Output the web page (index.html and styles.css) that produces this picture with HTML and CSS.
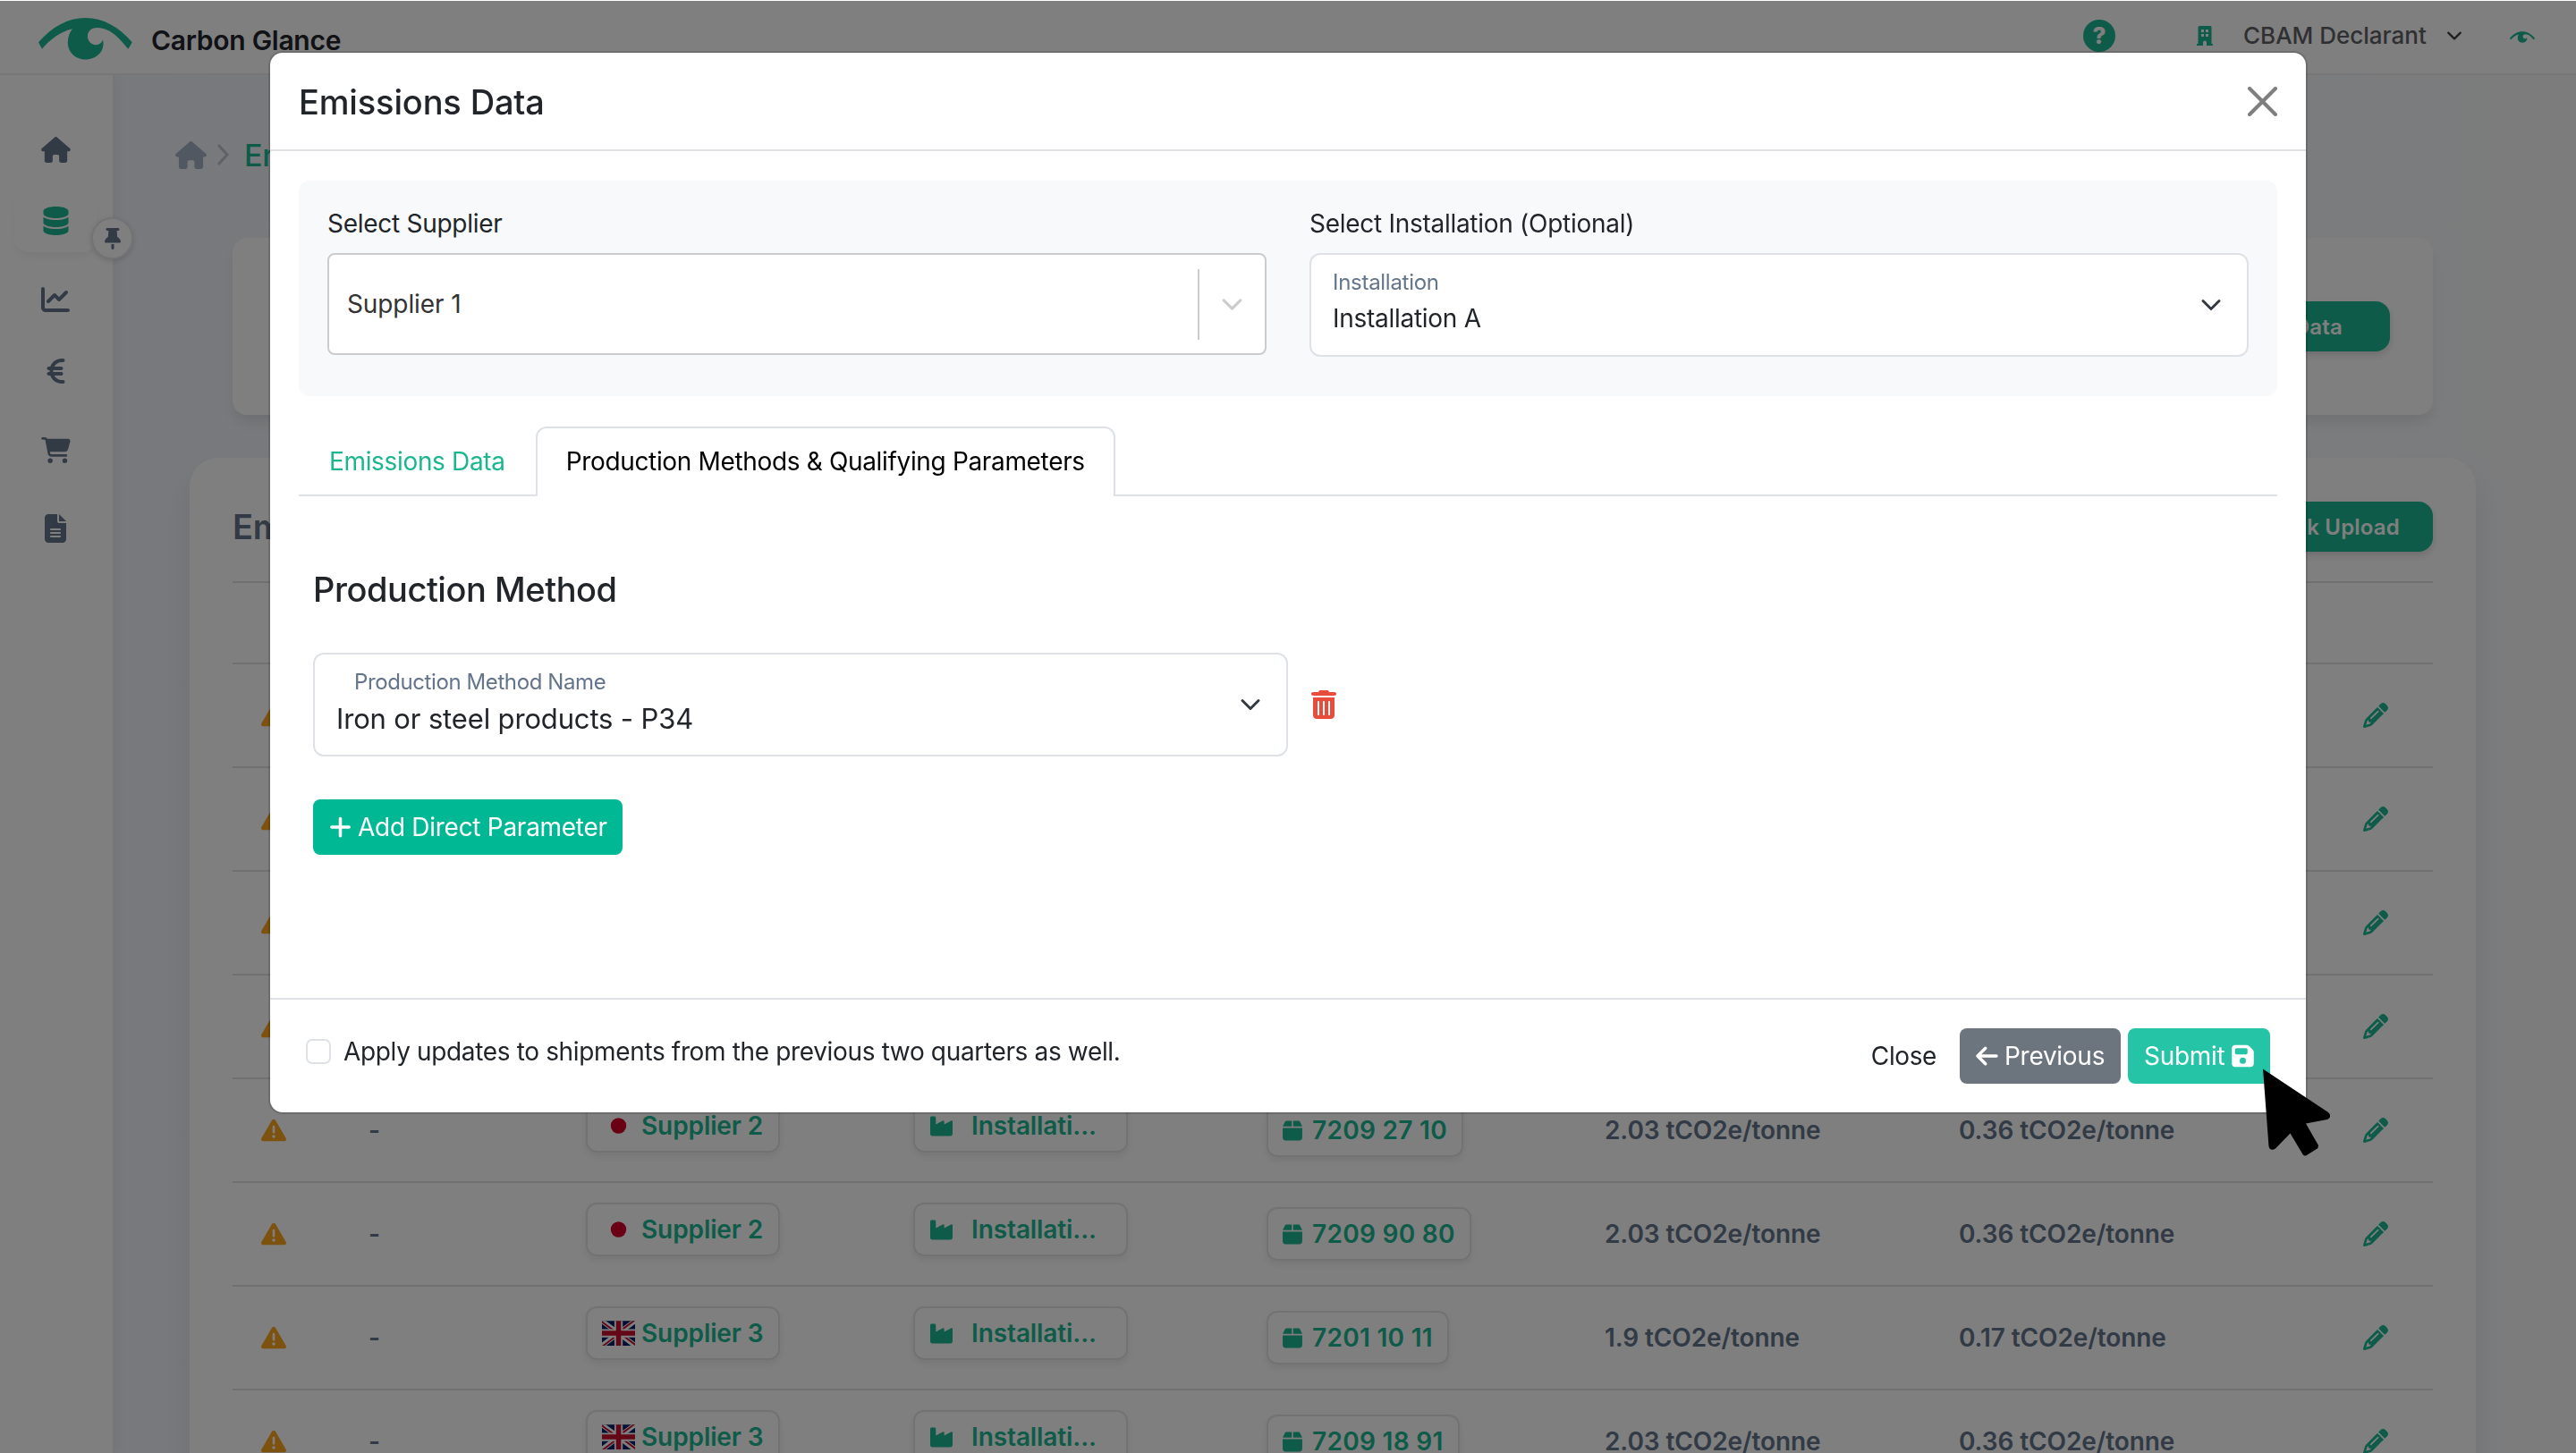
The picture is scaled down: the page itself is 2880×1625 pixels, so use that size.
FILE: index.html
```html
<!DOCTYPE html>
<html lang="en">
<head>
  <meta charset="UTF-8">
  <title>Carbon Glance</title>
  <meta name="viewport" content="width=device-width, initial-scale=1.0">
  <link rel="stylesheet" href="styles.css">
</head>
<body>

<!-- icon sprite -->
<svg class="sprite" xmlns="http://www.w3.org/2000/svg">
  <symbol id="logo" viewBox="0 0 105 47"><path d="M0 27.3C15 10 33 0 52.5 0S90 10 104.8 27.3L100.4 34.7C91 24 82 11.5 66 11C58 11 54.5 16 55 21.5C55.5 27 60 30.5 64.5 30.2C68 30 71 28 72 24.5C75 37 65 46.5 52.6 46.5C40 46.5 32.5 37 32.8 27C33 21 35 16 38 12.2C25 15 13 24 4 34.7Z"/></symbol>
  <symbol id="home" viewBox="0 0 576 512"><path d="M575.8 255.5c0 18-15 32.1-32 32.1h-32l.7 160.2c0 2.7-.2 5.4-.5 8.1V472c0 22.1-17.9 40-40 40H456c-1.1 0-2.2 0-3.3-.1c-1.4 .1-2.8 .1-4.2 .1H416 392c-22.1 0-40-17.9-40-40V448 384c0-17.7-14.3-32-32-32H256c-17.7 0-32 14.3-32 32v64 24c0 22.1-17.9 40-40 40H160 128.1c-1.5 0-3-.1-4.5-.2c-1.2 .1-2.4 .2-3.6 .2H104c-22.1 0-40-17.9-40-40V360c0-.9 0-1.9 .1-2.8V287.6H32c-18 0-32-14-32-32.1c0-9 3-17 10-24L266.4 8c7-7 15-8 22-8s15 2 21 7L564.8 231.5c8 7 12 15 11 24z"/></symbol>
  <symbol id="database" viewBox="0 0 448 512"><path d="M448 80v48c0 44.2-100.3 80-224 80S0 172.2 0 128V80C0 35.8 100.3 0 224 0S448 35.8 448 80zM393.2 214.7c20.8-7.4 39.9-16.9 54.8-28.6V288c0 44.2-100.3 80-224 80S0 332.2 0 288V186.1c14.9 11.8 34 21.2 54.8 28.6C99.7 230.7 159.5 240 224 240s124.3-9.3 169.2-25.3zM0 346.1c14.9 11.8 34 21.2 54.8 28.6C99.7 390.7 159.5 400 224 400s124.3-9.3 169.2-25.3c20.8-7.4 39.9-16.9 54.8-28.6V432c0 44.2-100.3 80-224 80S0 476.2 0 432V346.1z"/></symbol>
  <symbol id="chart" viewBox="0 0 512 512"><path d="M64 64c0-17.7-14.3-32-32-32S0 46.3 0 64V400c0 44.2 35.8 80 80 80H480c17.7 0 32-14.3 32-32s-14.3-32-32-32H80c-8.8 0-16-7.2-16-16V64zm406.6 86.6c12.5-12.5 12.5-32.8 0-45.3s-32.8-12.5-45.3 0L320 210.7l-57.4-57.4c-12.5-12.5-32.8-12.5-45.3 0l-112 112c-12.5 12.5-12.5 32.8 0 45.3s32.8 12.5 45.3 0L240 221.3l57.4 57.4c12.5 12.5 32.8 12.5 45.3 0l128-128z"/></symbol>
  <symbol id="euro" viewBox="0 0 320 512"><path d="M48.1 240c-.1 2.7-.1 5.3-.1 8v16c0 2.7 0 5.3 .1 8H32c-17.7 0-32 14.3-32 32s14.3 32 32 32H60.3C89.9 419.9 170 480 264 480h24c17.7 0 32-14.3 32-32s-14.3-32-32-32H264c-57.9 0-108.2-32.4-133.9-80H256c17.7 0 32-14.3 32-32s-14.3-32-32-32H112.2c-.1-2.6-.2-5.3-.2-8V248c0-2.7 .1-5.4 .2-8H256c17.7 0 32-14.3 32-32s-14.3-32-32-32H130.1c25.7-47.6 76-80 133.9-80h24c17.7 0 32-14.3 32-32s-14.3-32-32-32H264C170 32 89.9 92.1 60.3 176H32c-17.7 0-32 14.3-32 32s14.3 32 32 32H48.1z"/></symbol>
  <symbol id="cart" viewBox="0 0 576 512"><path d="M0 24C0 10.7 10.7 0 24 0H69.5c22 0 41.5 12.8 50.6 32h411c26.3 0 45.5 25 38.6 50.4l-41 152.3c-8.5 31.4-37 53.3-69.5 53.3H170.7l5.4 28.5c2.2 11.3 12.1 19.5 23.6 19.5H488c13.3 0 24 10.7 24 24s-10.7 24-24 24H199.7c-34.6 0-64.3-24.6-70.7-58.5L77.4 54.5c-.7-3.8-4-6.5-7.9-6.5H24C10.7 48 0 37.3 0 24zM128 464a48 48 0 1 1 96 0 48 48 0 1 1 -96 0zm336-48a48 48 0 1 1 0 96 48 48 0 1 1 0-96z"/></symbol>
  <symbol id="file" viewBox="0 0 384 512"><path d="M64 0C28.7 0 0 28.7 0 64V448c0 35.3 28.7 64 64 64H320c35.3 0 64-28.7 64-64V160H256c-17.7 0-32-14.3-32-32V0H64zM256 0V128H384L256 0zM112 256H272c8.8 0 16 7.2 16 16s-7.2 16-16 16H112c-8.8 0-16-7.2-16-16s7.2-16 16-16zm0 64H272c8.8 0 16 7.2 16 16s-7.2 16-16 16H112c-8.8 0-16-7.2-16-16s7.2-16 16-16zm0 64H272c8.8 0 16 7.2 16 16s-7.2 16-16 16H112c-8.8 0-16-7.2-16-16s7.2-16 16-16z"/></symbol>
  <symbol id="pin" viewBox="0 0 384 512"><path d="M32 32C32 14.3 46.3 0 64 0H320c17.7 0 32 14.3 32 32s-14.3 32-32 32H290.5l11.4 148.2c36.7 19.9 65.7 53.2 79.5 94.7l1 3c3.3 9.8 1.6 20.5-4.4 28.8s-15.7 13.3-26 13.3H32c-10.3 0-19.9-4.9-26-13.3s-7.7-19.1-4.4-28.8l1-3c13.8-41.5 42.8-74.8 79.5-94.7L93.5 64H64C46.3 64 32 49.7 32 32zM160 384h64v96c0 17.7-14.3 32-32 32s-32-14.3-32-32V384z"/></symbol>
  <symbol id="building" viewBox="0 0 18 22"><path fill-rule="evenodd" d="M3 0H15Q16.5 0 16.5 1.5V20H18V22H11V18.5Q11 16.5 9 16.5Q7 16.5 7 18.5V22H0V20H1.5V1.5Q1.5 0 3 0ZM5 4V7H8V4ZM10 4V7H13V4ZM5 9V12H8V9ZM10 9V12H13V9Z"/></symbol>
  <symbol id="chevron" viewBox="0 0 16 16"><path fill="none" stroke="currentColor" stroke-width="2" stroke-linecap="round" stroke-linejoin="round" d="M2 5l6 6 6-6"/></symbol>
  <symbol id="warning" viewBox="0 0 512 512"><path d="M256 32c14.2 0 27.3 7.5 34.5 19.8l216 368c7.3 12.4 7.3 27.7 .2 40.1S486.3 480 472 480H40c-14.3 0-27.6-7.7-34.7-20.1s-7-27.8 .2-40.1l216-368C228.7 39.5 241.8 32 256 32zm0 128c-13.3 0-24 10.7-24 24V296c0 13.3 10.7 24 24 24s24-10.7 24-24V184c0-13.3-10.7-24-24-24zm32 224a32 32 0 1 0 -64 0 32 32 0 1 0 64 0z"/></symbol>
  <symbol id="industry" viewBox="0 0 512 512"><path d="M32 32C14.3 32 0 46.3 0 64V304v48 80c0 26.5 21.5 48 48 48H464c26.5 0 48-21.5 48-48V304 152.2c0-18.2-19.4-29.7-35.4-21.1L320 215.4V152.2c0-18.2-19.4-29.7-35.4-21.1L128 215.4V64c0-17.7-14.3-32-32-32H32z"/></symbol>
  <symbol id="box" viewBox="0 0 448 512"><path d="M50.7 58.5L0 160H208V32H93.7C75.5 32 58.9 42.3 50.7 58.5zM240 160H448L397.3 58.5C389.1 42.3 372.5 32 354.3 32H240V160zm208 32H0V416c0 35.3 28.7 64 64 64H384c35.3 0 64-28.7 64-64V192z"/></symbol>
  <symbol id="pencil" viewBox="0 0 512 512"><path d="M410.3 231l11.3-11.3-33.9-33.9-62.1-62.1L291.7 89.8l-11.3 11.3-22.6 22.6L58.6 322.9c-10.4 10.4-18 23.3-22.2 37.4L1 480.7c-2.5 8.4-.2 17.5 6.1 23.7s15.3 8.5 23.7 6.1l120.3-35.4c14.1-4.2 27-11.8 37.4-22.2L387.7 253.7 410.3 231zM160 399.4l-9.1 22.7c-4 3.1-8.5 5.4-13.3 6.9L59.4 452l23-78.1c1.4-4.9 3.8-9.4 6.9-13.3l22.7-9.1v32c0 8.8 7.2 16 16 16h32zM362.7 18.7L348.3 33.2 325.7 55.8 314.3 67.1l33.9 33.9 62.1 62.1 33.9 33.9 11.3-11.3 22.6-22.6 14.5-14.5c25-25 25-65.5 0-90.5L453.3 18.7c-25-25-65.5-25-90.5 0zm-47.4 168l-144 144c-6.2 6.2-16.4 6.2-22.6 0s-6.2-16.4 0-22.6l144-144c6.2-6.2 16.4-6.2 22.6 0s6.2 16.4 0 22.6z"/></symbol>
  <symbol id="japan" viewBox="0 0 40 30"><path fill="#fff" d="M0 0h40v30H0z"/><circle cx="20" cy="15" r="9.4" fill="#d30029"/></symbol>
  <symbol id="uk" viewBox="0 0 640 480"><path fill="#012169" d="M0 0h640v480H0z"/><path fill="#fff" d="m75 0 244 181L562 0h78v62L400 241l240 178v61h-80L320 301 81 480H0v-60l239-178L0 64V0z"/><path fill="#c8102e" d="m424 281 216 159v40L369 281zm-184 20 6 35L54 480H0zM640 0v3L391 191l2-44L590 0zM0 0l239 176h-60L0 42z"/><path fill="#fff" d="M241 0v480h160V0zM0 160v160h640V160z"/><path fill="#c8102e" d="M0 193v96h640v-96zM273 0v480h96V0z"/></symbol>
  <symbol id="trash" viewBox="0 0 448 512"><path d="M135.2 17.7C140.6 6.8 151.7 0 163.8 0H284.2c12.1 0 23.2 6.8 28.6 17.7L320 32h96c17.7 0 32 14.3 32 32s-14.3 32-32 32H32C14.3 96 0 81.7 0 64S14.3 32 32 32h96l7.2-14.3zM32 128H416V448c0 35.3-28.7 64-64 64H96c-35.3 0-64-28.7-64-64V128zm96 64c-8.8 0-16 7.2-16 16V432c0 8.8 7.2 16 16 16s16-7.2 16-16V208c0-8.8-7.2-16-16-16zm96 0c-8.8 0-16 7.2-16 16V432c0 8.8 7.2 16 16 16s16-7.2 16-16V208c0-8.8-7.2-16-16-16zm96 0c-8.8 0-16 7.2-16 16V432c0 8.8 7.2 16 16 16s16-7.2 16-16V208c0-8.8-7.2-16-16-16z"/></symbol>
  <symbol id="plus" viewBox="0 0 448 512"><path d="M256 80c0-17.7-14.3-32-32-32s-32 14.3-32 32V224H48c-17.7 0-32 14.3-32 32s14.3 32 32 32H192V432c0 17.7 14.3 32 32 32s32-14.3 32-32V288H400c17.7 0 32-14.3 32-32s-14.3-32-32-32H256V80z"/></symbol>
  <symbol id="arrow-left" viewBox="0 0 448 512"><path d="M9.4 233.4c-12.5 12.5-12.5 32.8 0 45.3l160 160c12.5 12.5 32.8 12.5 45.3 0s12.5-32.8 0-45.3L109.2 288 416 288c17.7 0 32-14.3 32-32s-14.3-32-32-32l-306.7 0L214.6 118.6c12.5-12.5 12.5-32.8 0-45.3s-32.8-12.5-45.3 0l-160 160z"/></symbol>
  <symbol id="save" viewBox="0 0 448 512"><path d="M64 32C28.7 32 0 60.7 0 96V416c0 35.3 28.7 64 64 64H384c35.3 0 64-28.7 64-64V173.3c0-17-6.7-33.3-18.7-45.3L352 50.7C340 38.7 323.7 32 306.7 32H64zm0 96c0-17.7 14.3-32 32-32H288c17.7 0 32 14.3 32 32v64c0 17.7-14.3 32-32 32H96c-17.7 0-32-14.3-32-32V128zM224 288a64 64 0 1 1 0 128 64 64 0 1 1 0-128z"/></symbol>
</svg>

<header class="topbar">
  <svg class="logo"><use href="#logo"/></svg>
  <span class="brand">Carbon Glance</span>
  <div class="account">
    <span class="help">?</span>
    <svg class="building"><use href="#building"/></svg>
    <span class="role">CBAM Declarant</span>
    <svg class="role-chevron"><use href="#chevron"/></svg>
    <svg class="avatar"><use href="#logo"/></svg>
  </div>
</header>

<div class="layout">
  <nav class="sidebar">
    <a class="nav-item"><svg class="icon-wide"><use href="#home"/></svg></a>
    <a class="nav-item active"><svg class="icon-tall"><use href="#database"/></svg></a>
    <a class="nav-item"><svg class="icon-square"><use href="#chart"/></svg></a>
    <a class="nav-item"><svg class="icon-tall"><use href="#euro"/></svg></a>
    <a class="nav-item"><svg class="icon-wide"><use href="#cart"/></svg></a>
    <a class="nav-item"><svg class="icon-square"><use href="#file"/></svg></a>
    <span class="pin"><svg><use href="#pin"/></svg></span>
  </nav>

  <main class="main">
    <div class="breadcrumb">
      <svg class="crumb-home"><use href="#home"/></svg>
      <svg class="crumb-sep" viewBox="0 0 14 24"><path d="M2 1l10 11L2 23"/></svg>
      <span>Emissions</span>
    </div>

    <section class="card actions">
      <button class="main-btn">Add Data</button>
    </section>

    <section class="card list">
      <div class="list-head">
        <h2>Emissions</h2>
        <button class="main-btn">Bulk Upload</button>
      </div>
      <table>
        <colgroup>
          <col class="c-warn"><col class="c-date"><col class="c-supplier"><col class="c-inst"><col class="c-code"><col class="c-direct"><col class="c-indirect"><col>
        </colgroup>
        <thead><tr><th colspan="8"></th></tr></thead>
        <tbody>
          <tr><td><svg class="warn"><use href="#warning"/></svg></td><td colspan="6"></td><td><svg class="edit"><use href="#pencil"/></svg></td></tr>
          <tr><td><svg class="warn"><use href="#warning"/></svg></td><td colspan="6"></td><td><svg class="edit"><use href="#pencil"/></svg></td></tr>
          <tr><td><svg class="warn"><use href="#warning"/></svg></td><td colspan="6"></td><td><svg class="edit"><use href="#pencil"/></svg></td></tr>
          <tr><td><svg class="warn"><use href="#warning"/></svg></td><td colspan="6"></td><td><svg class="edit"><use href="#pencil"/></svg></td></tr>
          <tr>
            <td><svg class="warn"><use href="#warning"/></svg></td>
            <td>-</td>
            <td class="raised"><span class="badge supplier"><svg class="flag"><use href="#japan"/></svg>Supplier 2</span></td>
            <td class="raised"><span class="badge inst"><svg><use href="#industry"/></svg>Installati...</span></td>
            <td><span class="badge code"><svg><use href="#box"/></svg>7209 27 10</span></td>
            <td>2.03 tCO2e/tonne</td>
            <td>0.36 tCO2e/tonne</td>
            <td><svg class="edit"><use href="#pencil"/></svg></td>
          </tr>
          <tr>
            <td><svg class="warn"><use href="#warning"/></svg></td>
            <td>-</td>
            <td class="raised"><span class="badge supplier"><svg class="flag"><use href="#japan"/></svg>Supplier 2</span></td>
            <td class="raised"><span class="badge inst"><svg><use href="#industry"/></svg>Installati...</span></td>
            <td><span class="badge code"><svg><use href="#box"/></svg>7209 90 80</span></td>
            <td>2.03 tCO2e/tonne</td>
            <td>0.36 tCO2e/tonne</td>
            <td><svg class="edit"><use href="#pencil"/></svg></td>
          </tr>
          <tr>
            <td><svg class="warn"><use href="#warning"/></svg></td>
            <td>-</td>
            <td class="raised"><span class="badge supplier"><svg class="flag"><use href="#uk"/></svg>Supplier 3</span></td>
            <td class="raised"><span class="badge inst"><svg><use href="#industry"/></svg>Installati...</span></td>
            <td><span class="badge code"><svg><use href="#box"/></svg>7201 10 11</span></td>
            <td>1.9 tCO2e/tonne</td>
            <td>0.17 tCO2e/tonne</td>
            <td><svg class="edit"><use href="#pencil"/></svg></td>
          </tr>
          <tr>
            <td><svg class="warn"><use href="#warning"/></svg></td>
            <td>-</td>
            <td class="raised"><span class="badge supplier"><svg class="flag"><use href="#uk"/></svg>Supplier 3</span></td>
            <td class="raised"><span class="badge inst"><svg><use href="#industry"/></svg>Installati...</span></td>
            <td><span class="badge code"><svg><use href="#box"/></svg>7209 18 91</span></td>
            <td>2.03 tCO2e/tonne</td>
            <td>0.36 tCO2e/tonne</td>
            <td><svg class="edit"><use href="#pencil"/></svg></td>
          </tr>
        </tbody>
      </table>
    </section>
  </main>
</div>

<div class="backdrop"></div>

<div class="modal">
  <div class="modal-header">
    <h1>Emissions Data</h1>
    <svg class="close-x" viewBox="0 0 32 32"><path d="M2 2l28 28M30 2L2 30"/></svg>
  </div>

  <div class="modal-body">
    <div class="filters">
      <div class="field">
        <label>Select Supplier</label>
        <div class="supplier-select">
          <span>Supplier 1</span>
          <i class="divider"></i>
          <svg><use href="#chevron"/></svg>
        </div>
      </div>
      <div class="field">
        <label>Select Installation (Optional)</label>
        <div class="floating-select">
          <div>
            <small>Installation</small>
            <span>Installation A</span>
          </div>
          <svg><use href="#chevron"/></svg>
        </div>
      </div>
    </div>

    <div class="tabs">
      <a class="tab">Emissions Data</a>
      <a class="tab active">Production Methods &amp; Qualifying Parameters</a>
    </div>

    <div class="tab-content">
      <h3>Production Method</h3>
      <div class="method-row">
        <div class="floating-select method">
          <div>
            <small>Production Method Name</small>
            <span>Iron or steel products - P34</span>
          </div>
          <svg><use href="#chevron"/></svg>
        </div>
        <svg class="trash"><use href="#trash"/></svg>
      </div>
      <button class="btn btn-add"><svg><use href="#plus"/></svg>Add Direct Parameter</button>
    </div>
  </div>

  <div class="modal-footer">
    <label class="apply"><i class="checkbox"></i>Apply updates to shipments from the previous two quarters as well.</label>
    <button class="btn btn-close">Close</button>
    <button class="btn btn-prev"><svg><use href="#arrow-left"/></svg>Previous</button>
    <button class="btn btn-submit">Submit<svg><use href="#save"/></svg></button>
  </div>
</div>

<svg class="cursor" viewBox="0 0 76 98"><path d="M1 0.5L74 49Q79 54 73 57L49 61.5L63 86Q63 89 61 90L49 97.5Q47 98 45.5 96L31.5 72.5L15 89.500Q9 93 7.500 87Z"/></svg>

</body>
</html>
```
FILE: styles.css
```css
* {
  box-sizing: border-box;
}
body {
  margin: 0;
  height: 1625px;
  overflow: hidden;
  font-family: Inter, "Liberation Sans", sans-serif;
  font-size: 28px;
  letter-spacing: -0.28px;
  color: #212529;
  background: linear-gradient(90deg, #eff3f8, #f8f9fb);
}
svg {
  display: block;
  flex: none;
  fill: currentColor;
}
.sprite {
  position: absolute;
  width: 0;
  height: 0;
}
h1, h2, h3 {
  margin: 0;
  font-weight: 500;
  letter-spacing: -0.3px;
}
button {
  border: none;
  font-family: inherit;
  letter-spacing: inherit;
  white-space: nowrap;
}

/* top bar */
.topbar {
  height: 84px;
  padding: 4px 46px 0 43px;
  display: flex;
  align-items: center;
  background: #fff;
  border-bottom: 2px solid #ececee;
}
.logo {
  width: 105px;
  height: 47px;
  color: #1ab690;
}
.brand {
  margin-left: 21px;
  padding-top: 3px;
  font-size: 30px;
  font-weight: 600;
  color: #20242c;
}
.account {
  margin-left: auto;
  margin-top: -7px;
  display: flex;
  align-items: center;
  color: #1ab690;
}
.help {
  width: 36px;
  height: 36px;
  margin-right: 91px;
  border-radius: 50%;
  background: #1ab690;
  color: #fff;
  font-size: 26px;
  font-weight: 800;
  line-height: 36px;
  text-align: center;
}
.building {
  width: 18px;
  height: 22px;
  margin-right: 34px;
}
.role {
  width: 227px;
  font-size: 26px;
  font-weight: 500;
  letter-spacing: 0;
  color: #5e6064;
}
.role-chevron {
  width: 18px;
  height: 18px;
  margin-right: 53px;
  color: #3c3e42;
}
.avatar {
  width: 28px;
  height: 13px;
  margin-top: 3px;
}

/* sidebar */
.layout {
  display: flex;
  height: 1541px;
  overflow: hidden;
}
.sidebar {
  position: relative;
  width: 128px;
  height: 1541px;
  padding-top: 48px;
  padding-left: 16px;
  background: #fff;
  border-right: 2px solid #ebedf0;
  box-shadow: 4px 0 14px rgba(0,0,0,0.04);
}
.nav-item {
  width: 92px;
  height: 70px;
  margin-bottom: 18px;
  display: flex;
  align-items: center;
  justify-content: center;
  border-radius: 16px;
  color: #64748b;
}
.nav-item:nth-child(1), .nav-item:nth-child(3) {
  margin-bottom: 10px;
}
.nav-item.active {
  color: #1ab690;
  box-shadow: 0 6px 12px -2px rgba(0,0,0,0.06);
}
.icon-wide {
  width: 33px;
  height: 29px;
}
.icon-tall {
  width: 33px;
  height: 32px;
}
.icon-square {
  width: 32px;
  height: 32px;
}
.pin {
  position: absolute;
  left: 102px;
  top: 159px;
  width: 47px;
  height: 47px;
  display: flex;
  align-items: center;
  justify-content: center;
  border-radius: 50%;
  border: 2px solid #e6e7ea;
  background: #fff;
  color: #64748b;
  box-shadow: 0 2px 6px rgba(0,0,0,0.15);
}
.pin svg {
  width: 18px;
  height: 24px;
}

/* page behind the modal */
.main {
  width: 2752px;
  padding-top: 57px;
}
.breadcrumb {
  height: 64px;
  padding-left: 68px;
  display: flex;
  align-items: center;
  font-size: 34px;
  font-weight: 500;
  color: #1ab690;
}
.crumb-home {
  width: 35px;
  height: 31px;
  margin-right: 11px;
  color: #a3b0c2;
}
.crumb-sep {
  width: 14px;
  height: 24px;
  margin-right: 17px;
  fill: none;
  stroke: #bcc3cd;
  stroke-width: 3;
}
.card {
  background: #fff;
}
.actions {
  width: 2460px;
  height: 198px;
  margin: 61px 0 48px 132px;
  padding: 0 48px;
  display: flex;
  align-items: center;
  justify-content: flex-end;
  border-radius: 16px;
  box-shadow: 0 10px 16px -2px rgba(0,0,0,0.09);
}
.main-btn {
  height: 56px;
  padding: 0 37px;
  border-radius: 16px;
  background: #1ab690;
  color: #fff;
  font-size: 24px;
  font-weight: 600;
  letter-spacing: 0.2px;
  box-shadow: 0 4px 8px rgba(0,0,0,0.15);
}
.actions .main-btn {
  padding: 0 53px;
}
.list {
  width: 2556px;
  height: 1200px;
  margin-left: 84px;
  padding: 0 48px;
  border-radius: 32px;
  box-shadow: 0 20px 36px rgba(0,0,0,0.09);
}
.list-head {
  height: 140px;
  padding: 49px 0 33px;
  display: flex;
  align-items: center;
  justify-content: space-between;
  border-bottom: 2px solid #dfe1e4;
}
.list-head h2 {
  font-size: 38px;
  font-weight: 600;
  color: #64748b;
}
table {
  width: 2460px;
  table-layout: fixed;
  border-collapse: separate;
  border-spacing: 0;
}
.c-warn { width: 152px; }
.c-date { width: 243px; }
.c-supplier { width: 366px; }
.c-inst { width: 395px; }
.c-code { width: 378px; }
.c-direct { width: 396px; }
.c-indirect { width: 452px; }
th {
  height: 91px;
  padding: 0;
  border-bottom: 2px solid #dfe1e4;
}
td {
  height: 116px;
  padding: 0;
  border-bottom: 2px solid #dfe1e4;
  font-weight: 600;
  letter-spacing: -0.1px;
  color: #64748b;
  white-space: nowrap;
}
td:first-child {
  padding-left: 32px;
}
td.raised {
  padding-bottom: 10px;
}
.warn {
  width: 28px;
  height: 28px;
  color: #fba51f;
}
.edit {
  width: 28px;
  height: 28px;
  color: #1ab690;
}
.badge {
  width: fit-content;
  height: 60px;
  display: flex;
  align-items: center;
  border: 2px solid #e0e4e8;
  border-radius: 12px;
  color: #1ab690;
  box-shadow: 0 4px 8px rgba(0,0,0,0.08);
}
.supplier {
  width: 217px;
  padding-left: 16px;
}
.flag {
  width: 37px;
  height: 28px;
  margin-right: 7px;
}
.inst {
  width: 240px;
  padding-left: 17px;
}
.inst svg {
  width: 25px;
  height: 25px;
  margin-right: 21px;
}
.code {
  padding: 0 16px;
  letter-spacing: 0.3px;
}
.code svg {
  width: 22px;
  height: 25px;
  margin-right: 11px;
}

/* modal */
.backdrop {
  position: fixed;
  inset: 1px 0 0 0;
  background: rgba(0,0,0,0.5);
}
.modal {
  position: fixed;
  left: 302px;
  top: 59px;
  width: 2276px;
  height: 1185px;
  display: flex;
  flex-direction: column;
  background: #fff;
  border-radius: 14px;
  box-shadow: 0 0 0 2px rgba(0,0,0,0.15);
}
.modal-header {
  height: 110px;
  padding: 2px 32px 0;
  display: flex;
  align-items: center;
  justify-content: space-between;
  border-bottom: 2px solid #dee2e6;
}
.modal-header h1 {
  font-size: 38px;
  letter-spacing: -0.15px;
}
.close-x {
  width: 33px;
  height: 33px;
  margin-top: -2px;
  fill: none;
  stroke: #7f7f7f;
  stroke-width: 4;
  stroke-linecap: round;
}
.modal-body {
  flex: 1;
  padding: 33px 32px 0;
}
.filters {
  height: 241px;
  padding: 27px 32px 0;
  display: grid;
  grid-template-columns: 1fr 1fr;
  gap: 48px;
  background: #f8f9fb;
  border-radius: 12px;
}
.field label {
  display: block;
  margin-bottom: 12px;
  line-height: 42px;
}
.supplier-select {
  height: 114px;
  padding: 0 24px 0 20px;
  display: flex;
  align-items: center;
  background: #fff;
  border: 2px solid #ccc;
  border-radius: 8px;
  color: #333;
  letter-spacing: -0.1px;
}
.divider {
  width: 2px;
  height: 79px;
  margin-left: auto;
  margin-right: 24px;
  background: #ccc;
}
.supplier-select svg {
  width: 25px;
  height: 25px;
  color: #ccc;
}
.floating-select {
  height: 116px;
  padding: 0 28px 0 24px;
  display: flex;
  align-items: center;
  justify-content: space-between;
  background: #fff;
  border: 2px solid #dee2e6;
  border-radius: 12px;
}
.floating-select small {
  display: block;
  margin-top: -5px;
  font-size: 24px;
  line-height: 36px;
  color: #64748b;
}
.floating-select span {
  display: block;
  line-height: 45px;
}
.floating-select svg {
  width: 24px;
  height: 24px;
  color: #343a40;
}
.tabs {
  height: 78px;
  margin-top: 34px;
  display: flex;
  border-bottom: 2px solid #dee2e6;
}
.tab {
  height: 78px;
  padding: 0 32px;
  border: 2px solid transparent;
  border-bottom: none;
  border-radius: 12px 12px 0 0;
  line-height: 75px;
  letter-spacing: -0.34px;
  color: #1ab690;
}
.tab.active {
  background: #fff;
  border-color: #dee2e6;
  color: #000;
}
.tab-content {
  padding: 80px 16px 0;
}
.tab-content h3 {
  font-size: 38px;
  line-height: 48px;
  letter-spacing: -0.45px;
}
.method-row {
  margin: 47px 0 48px;
  display: flex;
  align-items: center;
  gap: 26px;
}
.method {
  width: 1090px;
}
.method small {
  padding-left: 20px;
  letter-spacing: -0.4px;
}
.method span {
  font-size: 31px;
  letter-spacing: -0.15px;
}
.trash {
  width: 28px;
  height: 32px;
  color: #e74c3c;
}
.btn {
  height: 62px;
  padding: 0 18px;
  display: flex;
  align-items: center;
  border-radius: 8px;
  color: #fff;
  font-size: 28px;
}
.btn svg {
  width: 25px;
  height: 28px;
}
.btn-add {
  width: 346px;
  background: #00b894;
}
.btn-add svg {
  margin-right: 7px;
}
.modal-footer {
  height: 128px;
  padding: 0 40px;
  display: flex;
  align-items: center;
  border-top: 2px solid #dee2e6;
}
.apply {
  margin-right: auto;
  margin-top: -10px;
  display: flex;
  align-items: center;
  letter-spacing: -0.35px;
}
.checkbox {
  width: 28px;
  height: 28px;
  margin-right: 14px;
  border: 2px solid #dee2e6;
  border-radius: 7px;
}
.btn-close {
  background: none;
  padding: 0 26px;
  color: #212529;
  letter-spacing: -0.4px;
}
.btn-prev {
  width: 180px;
  margin-right: 8px;
  background: #6c757d;
}
.btn-prev svg {
  margin-right: 7px;
}
.btn-submit {
  width: 159px;
  background: #26c4a6;
}
.btn-submit svg {
  margin-left: 8px;
}

/* mouse pointer */
.cursor {
  position: fixed;
  left: 2529px;
  top: 1195px;
  width: 76px;
  height: 98px;
  fill: #000;
}
```
